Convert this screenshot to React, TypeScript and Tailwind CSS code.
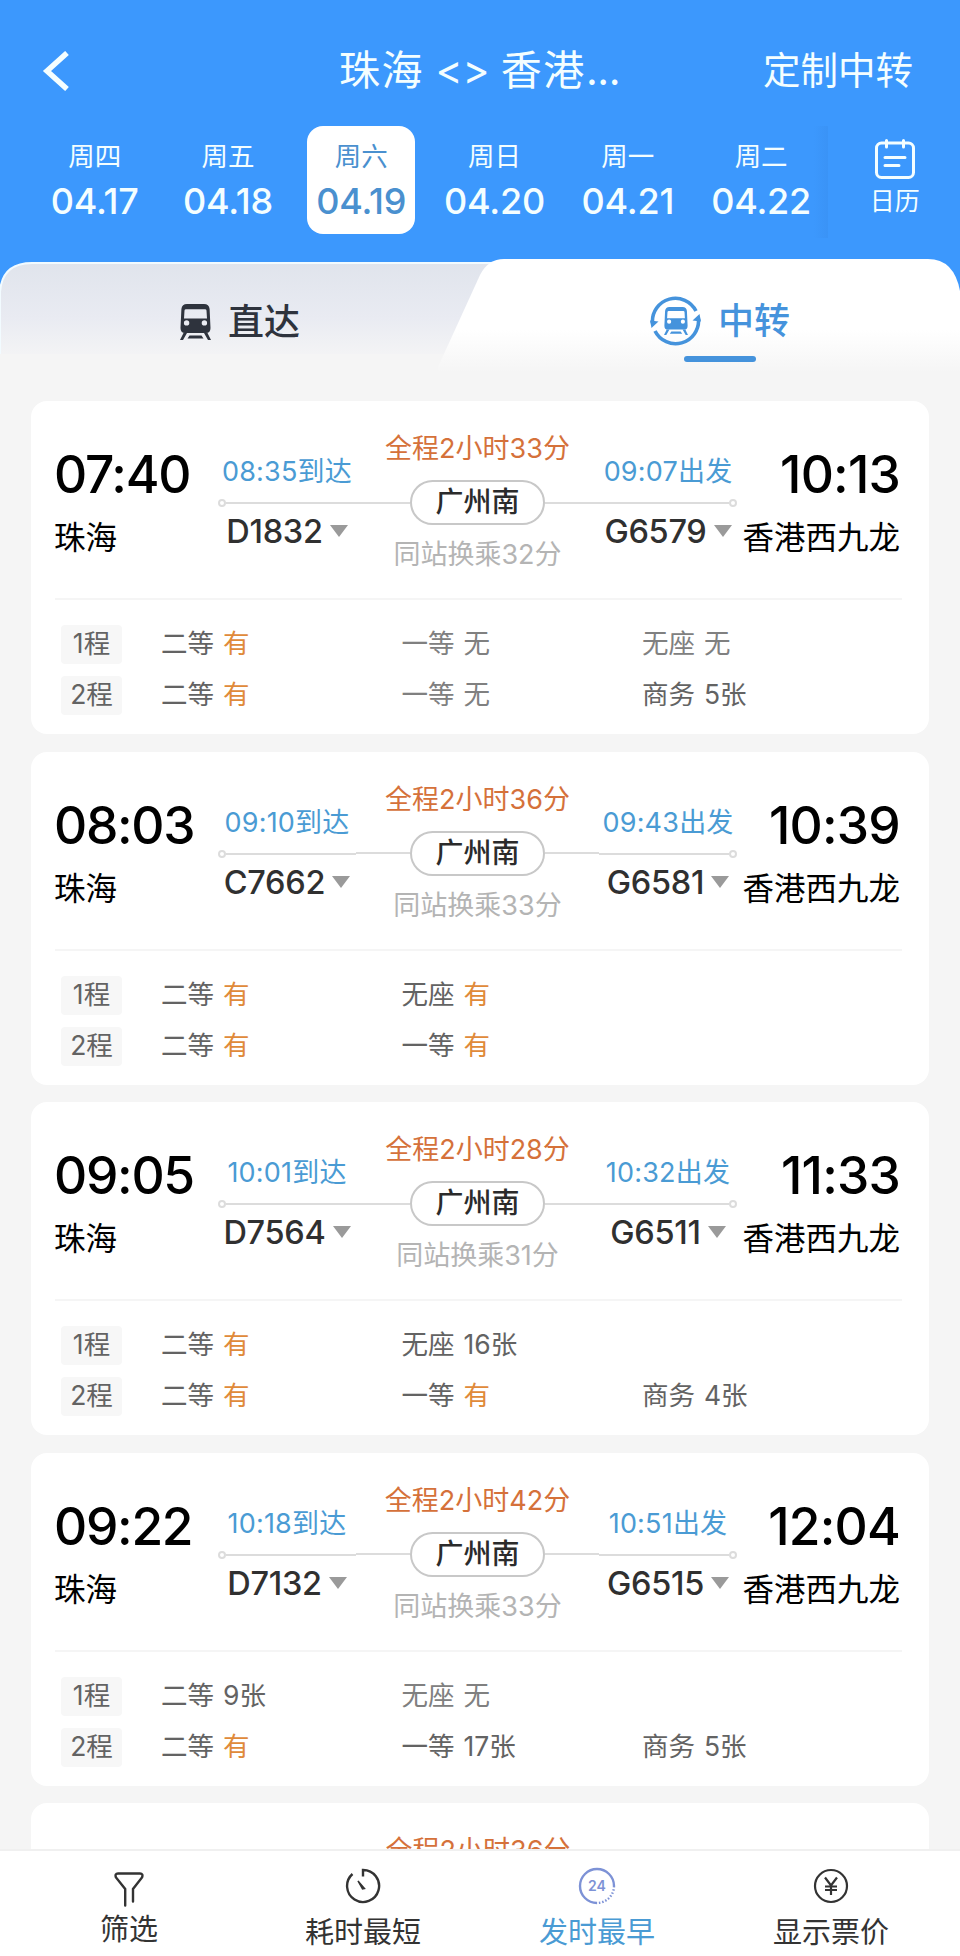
interface Seat {
  type: string;
  left: string;
}

interface Trip {
  id: number;
  depart: string;
  arrive: string;
  total: string;
  firstArrive: string;
  firstTrain: string;
  secondDepart: string;
  secondTrain: string;
  wait: string;
  legs: Seat[][];
}

const days = [
  { week: "周四", date: "04.17" },
  { week: "周五", date: "04.18" },
  { week: "周六", date: "04.19" },
  { week: "周日", date: "04.20" },
  { week: "周一", date: "04.21" },
  { week: "周二", date: "04.22" },
];

const trips: Trip[] = [
  {
    id: 1,
    depart: "07:40",
    arrive: "10:13",
    total: "全程2小时33分",
    firstArrive: "08:35到达",
    firstTrain: "D1832",
    secondDepart: "09:07出发",
    secondTrain: "G6579",
    wait: "同站换乘32分",
    legs: [
      [{ type: "二等", left: "有" }, { type: "一等", left: "无" }, { type: "无座", left: "无" }],
      [{ type: "二等", left: "有" }, { type: "一等", left: "无" }, { type: "商务", left: "5张" }],
    ],
  },
  {
    id: 2,
    depart: "08:03",
    arrive: "10:39",
    total: "全程2小时36分",
    firstArrive: "09:10到达",
    firstTrain: "C7662",
    secondDepart: "09:43出发",
    secondTrain: "G6581",
    wait: "同站换乘33分",
    legs: [
      [{ type: "二等", left: "有" }, { type: "无座", left: "有" }],
      [{ type: "二等", left: "有" }, { type: "一等", left: "有" }],
    ],
  },
  {
    id: 3,
    depart: "09:05",
    arrive: "11:33",
    total: "全程2小时28分",
    firstArrive: "10:01到达",
    firstTrain: "D7564",
    secondDepart: "10:32出发",
    secondTrain: "G6511",
    wait: "同站换乘31分",
    legs: [
      [{ type: "二等", left: "有" }, { type: "无座", left: "16张" }],
      [{ type: "二等", left: "有" }, { type: "一等", left: "有" }, { type: "商务", left: "4张" }],
    ],
  },
  {
    id: 4,
    depart: "09:22",
    arrive: "12:04",
    total: "全程2小时42分",
    firstArrive: "10:18到达",
    firstTrain: "D7132",
    secondDepart: "10:51出发",
    secondTrain: "G6515",
    wait: "同站换乘33分",
    legs: [
      [{ type: "二等", left: "9张" }, { type: "无座", left: "无" }],
      [{ type: "二等", left: "有" }, { type: "一等", left: "17张" }, { type: "商务", left: "5张" }],
    ],
  },
];

function Train({ className }: { className: string }) {
  return (
    <svg viewBox="0 0 31 36" className={className} fill="currentColor">
      <path
        fillRule="evenodd"
        d="M7 0H24Q29 0 29.6 5L30.5 24Q30.5 29 26 29H5Q.5 29 .5 24L1.4 5Q2 0 7 0ZM6 5.2Q4.6 5.2 4.5 6.6L4 14.6H27L26.5 6.6Q26.4 5.2 25 5.2ZM6.6 16.2A2.7 2.7 0 1 0 6.6 21.6A2.7 2.7 0 1 0 6.6 16.2ZM24.4 16.2A2.7 2.7 0 1 0 24.4 21.6A2.7 2.7 0 1 0 24.4 16.2Z"
      />
      <path d="M3.5 29H7L3 36H0ZM24 29H27.5L31 36H28ZM9.5 31.6H21.5L23.5 34.4H7.5Z" />
    </svg>
  );
}

function Header() {
  return (
    <header className="h-[259px] text-[#f4feff]">
      <div className="flex h-[126px] items-center pt-[15px] pl-[42px] pr-[47px]">
        <svg viewBox="0 0 28 40" className="h-10 w-7" fill="none" stroke="currentColor" strokeWidth="5.5">
          <path d="M25 2L5 20L25 38" />
        </svg>
        <h1 className="ml-[269px] flex-1 text-[41px] leading-none tracking-[1.6px] whitespace-nowrap">
          珠海
          <span className="tracking-[-0.2px]"> &lt;&gt; </span>
          香港
          <span className="tracking-[-0.4px]">...</span>
        </h1>
        <span className="text-[37.5px] leading-none">定制中转</span>
      </div>
      <div className="flex pl-[28px]">
        {days.map((day) => (
          <div key={day.date} className="flex w-[133.3px] justify-center">
            <div
              className={
                day.week === "周六"
                  ? "flex h-[108px] w-[108px] flex-col items-center rounded-2xl bg-white pt-[15px] text-[#4a90cf]"
                  : "flex h-[108px] w-[108px] flex-col items-center pt-[15px]"
              }
            >
              <span className="text-[26.5px] leading-[30px]">{day.week}</span>
              <span className="mt-2.5 text-[36px] leading-10 font-medium tracking-[-0.2px]">{day.date}</span>
            </div>
          </div>
        ))}
        <div className="-ml-[14px] h-[112px] w-3.5 bg-linear-to-r from-transparent to-[#3a93f6]" />
        <div className="ml-[26px] flex w-[82px] flex-col items-center pt-[13px]">
          <svg viewBox="0 0 40 40" className="h-10 w-10" fill="none" stroke="currentColor" strokeWidth="3" strokeLinecap="round">
            <rect x="1.5" y="4" width="37" height="34.5" rx="5" />
            <path d="M11.5 1.5V8M28.5 1.5V8M10 18.5H30M10 26.5H24" />
          </svg>
          <span className="mt-2 text-[25px] leading-7">日历</span>
        </div>
      </div>
    </header>
  );
}

function Tabs() {
  return (
    <div className="relative h-[142px]">
      <svg viewBox="0 0 960 142" className="absolute inset-0 h-full w-full">
        <defs>
          <linearGradient id="direct" x1="0" y1="0" x2="0" y2="1">
            <stop offset="0" stopColor="#e0e4ec" />
            <stop offset="0.4" stopColor="#e9ebf2" />
            <stop offset="0.68" stopColor="#f4f4f5" />
            <stop offset="1" stopColor="#f5f5f5" />
          </linearGradient>
          <linearGradient id="transfer" x1="0" y1="0" x2="0" y2="1">
            <stop offset="0.5" stopColor="#ffffff" />
            <stop offset="0.8" stopColor="#f5f5f5" />
          </linearGradient>
        </defs>
        <path d="M0 142V33Q2 4 32 4H520V142Z" fill="url(#direct)" stroke="#f2fbff" strokeWidth="2" />
        <path d="M0 95H520V142H0Z" fill="#f5f5f5" />
        <path d="M960 142V32Q954 0 928 0H504Q488 0 480 16L438 108V142Z" fill="url(#transfer)" />
      </svg>
      <div className="relative flex h-[103px]">
        <div className="flex h-[103px] w-1/2 items-center pt-[22px] pl-[180px] text-[#2e333d]">
          <Train className="h-9 w-[31px]" />
          <span className="ml-[17px] text-[36px] leading-10 font-medium">直达</span>
        </div>
        <div className="flex w-1/2 flex-col text-[#4593dc]">
          <div className="flex items-center pt-[37px] pl-[170px]">
            <div className="relative flex h-[50px] w-[51px] items-center justify-center">
              <svg viewBox="0 0 51 50" className="absolute inset-0" fill="none" stroke="currentColor" strokeWidth="3.6">
                <path d="M2.5 27A23 23 0 0 1 46 15M48.5 23A23 23 0 0 1 5 35" />
                <path d="M0 24.5L8.500 25.5L1.5 32ZM51 25.5L42.5 24.5L49.5 18Z" fill="currentColor" stroke="none" />
              </svg>
              <Train className="h-7 w-6" />
            </div>
            <span className="ml-[17px] text-[36px] leading-10 font-medium">中转</span>
          </div>
          <div className="mt-2.5 ml-[204px] h-1.5 w-[72px] shrink-0 rounded-full bg-[#4593dc]" />
        </div>
      </div>
    </div>
  );
}

function TrainNo({ name }: { name: string }) {
  return (
    <div className="mt-[3px] flex h-9 items-center justify-center text-[32.5px] leading-9 font-medium tracking-[-0.3px] text-[#303030]">
      {name}
      <svg viewBox="0 0 18 12" className="-mt-0.5 ml-[7px] h-3 w-[18px]" fill="#9a9a9a">
        <path d="M0 0H18L9 12Z" />
      </svg>
    </div>
  );
}

function TripHead({ trip }: { trip: Trip }) {
  return (
    <div className="flex h-[197px] pr-[29px] pl-[23px]">
      <div className="w-[164px] pt-[47px] text-black">
        <div className="text-[51.5px] leading-[52px] font-medium tracking-[-1.3px] whitespace-nowrap">{trip.depart}</div>
        <div className="mt-5 text-[31.5px] leading-9">珠海</div>
      </div>
      <div className="w-[138px] pt-[55px]">
        <div className="-mx-2 text-center text-[27px] leading-8 tracking-[0.2px] whitespace-nowrap text-[#4a9bd4]">{trip.firstArrive}</div>
        <div className="mt-[7px] flex h-4 items-center">
          <i className="h-2 w-2 rounded-full border-2 border-[#dcdcdc]" />
          <i className="h-0.5 flex-1 bg-[#dcdcdc]" />
        </div>
        <TrainNo name={trip.firstTrain} />
      </div>
      <div className="w-[243px] pt-8 text-center">
        <div className="text-[27px] leading-8 text-[#d5713a]">{trip.total}</div>
        <div className="mt-[15px] flex items-center">
          <i className="h-0.5 flex-1 bg-[#dcdcdc]" />
          <span className="h-[45px] w-[135px] rounded-full border-2 border-[#c8c8c8] text-[28px] leading-[41px] font-medium text-[#2b2b2b]">
            广州南
          </span>
          <i className="h-0.5 flex-1 bg-[#dcdcdc]" />
        </div>
        <div className="mt-[14px] text-[27px] leading-8 text-[#b4b4b4]">{trip.wait}</div>
      </div>
      <div className="w-[138px] pt-[55px]">
        <div className="-mx-2 text-center text-[27px] leading-8 tracking-[0.2px] whitespace-nowrap text-[#4a9bd4]">{trip.secondDepart}</div>
        <div className="mt-[7px] flex h-4 items-center">
          <i className="h-0.5 flex-1 bg-[#dcdcdc]" />
          <i className="h-2 w-2 rounded-full border-2 border-[#dcdcdc]" />
        </div>
        <TrainNo name={trip.secondTrain} />
      </div>
      <div className="flex flex-1 flex-col items-end pt-[47px] text-black">
        <div className="text-[51.5px] leading-[52px] font-medium tracking-[-0.8px] whitespace-nowrap">{trip.arrive}</div>
        <div className="mt-5 text-[31.5px] leading-9 whitespace-nowrap">香港西九龙</div>
      </div>
    </div>
  );
}

function SeatInfo({ seat }: { seat: Seat }) {
  let color = "text-[#636363]";
  if (seat.left === "有") color = "text-[#e08a3a]";
  if (seat.left === "无") color = "text-[#808080]";
  return (
    <div className="w-[240.5px]">
      <span className={seat.left === "无" ? "text-[#808080]" : "text-[#636363]"}>{seat.type}</span>
      <span className={"ml-[9px] " + color}>{seat.left}</span>
    </div>
  );
}

function TripCard({ trip }: { trip: Trip }) {
  return (
    <div className="h-[333px] shrink-0 rounded-2xl bg-white">
      <TripHead trip={trip} />
      <div className="mr-[27px] ml-6 h-0.5 bg-[#f5f5f5]" />
      <div className="flex flex-col gap-3 pt-[25px] pl-[30px] text-[26.5px] leading-[37px]">
        {trip.legs.map((seats, i) => (
          <div key={i} className="flex h-[39px]">
            <div className="mr-[39px] w-[61px] rounded bg-[#f7f7f7] text-center text-[#636363]">{i + 1}程</div>
            {seats.map((seat) => (
              <SeatInfo key={seat.type} seat={seat} />
            ))}
          </div>
        ))}
      </div>
    </div>
  );
}

function BottomBar() {
  return (
    <nav className="flex h-[107px] border-t-2 border-[#f0f0f0] bg-white px-3 text-[29px] leading-8 text-[#333]">
      <div className="flex w-[234px] flex-col items-center pt-[21px]">
        <svg viewBox="0 0 30 35" className="h-[35px] w-[30px]" fill="none" stroke="currentColor" strokeWidth="2.4" strokeLinecap="round">
          <path d="M11.2 33.5V17L2 5.5Q.5 1.5 4 1.5H26Q29.5 1.5 28 5.5L19 17V29.5" />
        </svg>
        <span className="mt-[7px]">筛选</span>
      </div>
      <div className="flex w-[234px] flex-col items-center pt-[17px]">
        <svg viewBox="0 0 36 36" className="h-9 w-9" fill="none" stroke="currentColor" strokeWidth="2.4">
          <path d="M18 8.5V2A16 16 0 1 1 7.5 6" />
          <path d="M13 13L19.5 20.5L17.5 21Z" fill="currentColor" strokeWidth="1.5" />
        </svg>
        <span className="mt-[13px]">耗时最短</span>
      </div>
      <div className="flex w-[234px] flex-col items-center pt-[16px] text-[#4a9bd4]">
        <svg viewBox="0 0 38 38" className="h-[38px] w-[38px] text-[#7d92d6]" fill="none" stroke="currentColor" strokeWidth="2.4">
          <path d="M19 36A17 17 0 1 1 36 19" />
          <path d="M36 19A17 17 0 0 1 19 36" strokeDasharray="1.5 1.8" />
          <text x="19" y="24" textAnchor="middle" fontSize="14" fontWeight="600" fill="currentColor" stroke="none">
            24
          </text>
        </svg>
        <span className="mt-3">发时最早</span>
      </div>
      <div className="flex w-[234px] flex-col items-center pt-[17px]">
        <svg viewBox="0 0 36 36" className="h-9 w-9" fill="none" stroke="currentColor" strokeWidth="2.2">
          <circle cx="18" cy="18" r="16" />
          <path d="M12 9.5L18 17.5L24 9.5M18 17.5V27M12 18.5H24M12 22H24" />
        </svg>
        <span className="mt-[13px]">显示票价</span>
      </div>
    </nav>
  );
}

export default function App() {
  return (
    <div className="flex h-[1956px] w-[960px] flex-col overflow-hidden bg-[#f5f5f5] font-['Inter','Noto_Sans_CJK_SC',sans-serif]">
      <div className="bg-[#3c98fd]">
        <Header />
        <Tabs />
      </div>
      <main className="flex h-[1448px] flex-col gap-[17.5px] overflow-hidden px-[31px]">
        {trips.map((trip) => (
          <TripCard key={trip.id} trip={trip} />
        ))}
        <div className="h-[60px] shrink-0 rounded-t-2xl bg-white pt-8 pr-1 text-center text-[27px] leading-8 text-[#d5713a]">
          全程2小时36分
        </div>
      </main>
      <BottomBar />
    </div>
  );
}
